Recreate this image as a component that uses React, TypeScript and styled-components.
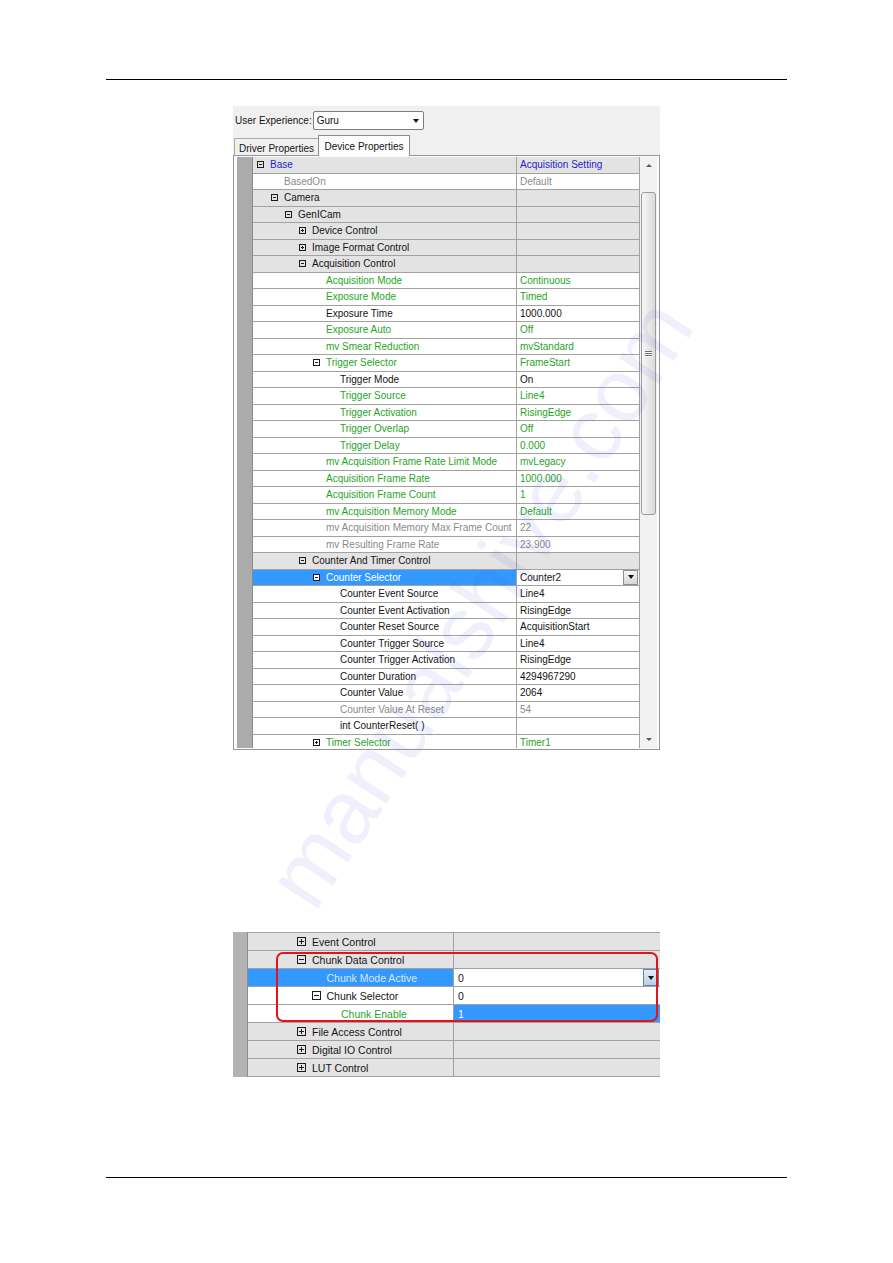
import React from 'react';
import styled, { createGlobalStyle } from 'styled-components';

type Tone = 'black' | 'green' | 'blue' | 'gray' | 'white' | 'pale';
type Fill = 'cat' | 'leaf' | 'sel';

interface PropRow {
  name: string;
  value?: string;
  level: number;
  tone: Tone;
  toggle?: 'plus' | 'minus';
  fill?: Fill;
  dropdown?: boolean;
}

const toneColor: Record<Tone, string> = {
  black: '#141414',
  green: '#1fa51f',
  blue: '#2323cc',
  gray: '#8a8a8a',
  white: '#ffffff',
  pale: '#d9e5fb',
};

const fillColor: Record<Fill, string> = {
  cat: '#e3e3e3',
  leaf: '#ffffff',
  sel: '#3399ff',
};

const GlobalStyle = createGlobalStyle`
  html, body { margin: 0; padding: 0; background: #fff; }
  body { font-family: "Liberation Sans", Arial, sans-serif; }
  * { box-sizing: border-box; }
`;

const Page = styled.div`
  position: relative;
  width: 893px;
  height: 1263px;
  padding: 79px 106px 0;
  overflow: hidden;
`;

const Rule = styled.div<{ $gap?: number }>`
  width: 681px;
  height: 1px;
  background: #000;
  margin-top: ${(p) => p.$gap ?? 0}px;
`;

/* ---------- figure 1: property grid window ---------- */

const Window = styled.div`
  display: flex;
  flex-direction: column;
  width: 427px;
  height: 644px;
  margin: 26px 0 0 127px;
  background: #f0f0f0;
  font-size: 10px;
`;

const Toolbar = styled.div`
  display: flex;
  align-items: center;
  gap: 1px;
  height: 29px;
  padding-left: 2px;
  color: #141414;
`;

const Combo = styled.div`
  display: flex;
  align-items: center;
  justify-content: space-between;
  width: 111px;
  height: 19px;
  padding: 0 4px 0 3px;
  background: #fff;
  border: 1px solid #7d7d7d;
  border-radius: 2px;
`;

const Caret = styled.span<{ $w?: number }>`
  width: 0;
  height: 0;
  border-left: ${(p) => (p.$w ?? 7) / 2}px solid transparent;
  border-right: ${(p) => (p.$w ?? 7) / 2}px solid transparent;
  border-top: ${(p) => Math.round((p.$w ?? 7) / 2)}px solid #111;
`;

const Tabs = styled.div`
  display: flex;
  align-items: flex-end;
  height: 20px;
  padding-left: 1px;
`;

const Tab = styled.div<{ $active?: boolean }>`
  position: relative;
  display: flex;
  align-items: center;
  justify-content: center;
  width: ${(p) => (p.$active ? 92 : 84)}px;
  height: ${(p) => (p.$active ? 21 : 17)}px;
  margin-bottom: ${(p) => (p.$active ? -1 : 0)}px;
  padding-top: ${(p) => (p.$active ? 0 : 2)}px;
  background: ${(p) => (p.$active ? '#fdfdfd' : '#f0f0f0')};
  border: 1px solid ${(p) => (p.$active ? '#8d8d8d' : '#aaaaaa')};
  border-bottom: none;
  border-right-width: ${(p) => (p.$active ? 1 : 0)}px;
  z-index: ${(p) => (p.$active ? 1 : 0)};
  color: #141414;
`;

const Frame = styled.div`
  flex: 1;
  display: flex;
  min-height: 0;
  padding: 1px 2px 1px 3px;
  background: #fbfbfb;
  border: 1px solid #979797;
`;

const Gutter = styled.div<{ $w: number; $color: string }>`
  flex: none;
  width: ${(p) => p.$w}px;
  background: ${(p) => p.$color};
  border-right: 1px solid #8c8c8c;
`;

const Rows = styled.div<{ $w: number; $top?: boolean }>`
  flex: none;
  display: flex;
  flex-direction: column;
  width: ${(p) => p.$w}px;
  overflow: hidden;
  border-top: ${(p) => (p.$top ? '1px solid #a4a4a4' : 'none')};
`;

const Row = styled.div<{ $h: number }>`
  flex: none;
  display: flex;
  height: ${(p) => p.$h}px;
  border-bottom: 1px solid #a2a2a2;
`;

const NameCell = styled.div<{ $w: number; $indent: number; $fill: Fill }>`
  flex: none;
  display: flex;
  align-items: center;
  width: ${(p) => p.$w}px;
  padding-left: ${(p) => p.$indent}px;
  background: ${(p) => fillColor[p.$fill]};
  border-right: 1px solid #a2a2a2;
  white-space: nowrap;
  overflow: hidden;
`;

const ValueCell = styled.div<{ $w: number; $pad: number; $fill: Fill; $edge?: boolean }>`
  flex: none;
  display: flex;
  align-items: center;
  width: ${(p) => p.$w}px;
  padding-left: ${(p) => p.$pad}px;
  padding-right: 1px;
  background: ${(p) => fillColor[p.$fill]};
  border-right: ${(p) => (p.$edge ? '1px solid #a2a2a2' : 'none')};
  white-space: nowrap;
  overflow: hidden;
`;

const Label = styled.span<{ $tone: Tone }>`
  color: ${(p) => toneColor[p.$tone]};
`;

const ToggleSvg = styled.svg<{ $gap: number; $size: number }>`
  flex: none;
  margin: 0 ${(p) => p.$gap}px 0 ${(p) => -(p.$size + p.$gap)}px;
`;

const DropButton = styled.div<{ $w: number; $h: number; $blue?: boolean }>`
  display: flex;
  align-items: center;
  justify-content: center;
  width: ${(p) => p.$w}px;
  height: ${(p) => p.$h}px;
  margin-left: auto;
  border: 1px solid ${(p) => (p.$blue ? '#5f87ad' : '#8e8e8e')};
  background: ${(p) =>
    p.$blue
      ? 'linear-gradient(#e4eef8, #b9cfe4)'
      : 'linear-gradient(#f4f4f4, #d6d6d6)'};
`;

const ScrollBar = styled.div`
  flex: none;
  display: flex;
  flex-direction: column;
  align-items: center;
  width: 17px;
  background: #f2f2f2;
`;

const ArrowButton = styled.div<{ $down?: boolean }>`
  display: flex;
  align-items: center;
  justify-content: center;
  width: 17px;
  height: 17px;
  margin-top: ${(p) => (p.$down ? 'auto' : '0')};
  &::after {
    content: '';
    border-left: 3px solid transparent;
    border-right: 3px solid transparent;
    ${(p) => (p.$down ? 'border-top' : 'border-bottom')}: 3px solid #5a5a5a;
  }
`;

const Thumb = styled.div`
  display: flex;
  flex-direction: column;
  align-items: center;
  justify-content: center;
  gap: 1px;
  width: 15px;
  height: 323px;
  margin-top: 18px;
  border: 1px solid #9c9c9c;
  border-radius: 3px;
  background: linear-gradient(to right, #f6f6f6, #e6e6e6 60%, #dadada);
`;

const Grip = styled.span`
  width: 7px;
  height: 1px;
  background: #6c6c6c;
  box-shadow: 0 1px 0 #fff;
`;

/* ---------- figure 2: cropped grid with annotation ---------- */

const Snippet = styled.div`
  position: relative;
  display: flex;
  width: 427px;
  height: 145px;
  margin: 182px 0 0 127px;
  font-size: 10.5px;
`;

const Highlight = styled.div`
  position: absolute;
  left: 43px;
  top: 20px;
  width: 382px;
  height: 70px;
  border: 2px solid #e1141c;
  border-radius: 7px;
  pointer-events: none;
`;

const Watermark = styled.div`
  position: absolute;
  left: 30px;
  top: 552px;
  width: 900px;
  text-align: center;
  transform: rotate(-57deg);
  font: 90px "Liberation Sans", sans-serif;
  color: rgba(60, 60, 230, 0.08);
  white-space: nowrap;
  pointer-events: none;
`;

function Toggle({ kind, size, gap, filled }: { kind: 'plus' | 'minus'; size: number; gap: number; filled?: boolean }) {
  const m = size / 2;
  return (
    <ToggleSvg width={size} height={size} viewBox={`0 0 ${size} ${size}`} $size={size} $gap={gap}>
      <rect x="0.5" y="0.5" width={size - 1} height={size - 1} fill={filled ? '#fff' : 'none'} stroke="#1c1c1c" />
      <path d={`M2 ${m}H${size - 2}`} stroke="#1c1c1c" />
      {kind === 'plus' && <path d={`M${m} 2V${size - 2}`} stroke="#1c1c1c" />}
    </ToggleSvg>
  );
}

const deviceRows: PropRow[] = [
  { name: 'Base', value: 'Acquisition Setting', level: 0, tone: 'blue', toggle: 'minus', fill: 'cat' },
  { name: 'BasedOn', value: 'Default', level: 1, tone: 'gray' },
  { name: 'Camera', level: 1, tone: 'black', toggle: 'minus', fill: 'cat' },
  { name: 'GenICam', level: 2, tone: 'black', toggle: 'minus', fill: 'cat' },
  { name: 'Device Control', level: 3, tone: 'black', toggle: 'plus', fill: 'cat' },
  { name: 'Image Format Control', level: 3, tone: 'black', toggle: 'plus', fill: 'cat' },
  { name: 'Acquisition Control', level: 3, tone: 'black', toggle: 'minus', fill: 'cat' },
  { name: 'Acquisition Mode', value: 'Continuous', level: 4, tone: 'green' },
  { name: 'Exposure Mode', value: 'Timed', level: 4, tone: 'green' },
  { name: 'Exposure Time', value: '1000.000', level: 4, tone: 'black' },
  { name: 'Exposure Auto', value: 'Off', level: 4, tone: 'green' },
  { name: 'mv Smear Reduction', value: 'mvStandard', level: 4, tone: 'green' },
  { name: 'Trigger Selector', value: 'FrameStart', level: 4, tone: 'green', toggle: 'minus' },
  { name: 'Trigger Mode', value: 'On', level: 5, tone: 'black' },
  { name: 'Trigger Source', value: 'Line4', level: 5, tone: 'green' },
  { name: 'Trigger Activation', value: 'RisingEdge', level: 5, tone: 'green' },
  { name: 'Trigger Overlap', value: 'Off', level: 5, tone: 'green' },
  { name: 'Trigger Delay', value: '0.000', level: 5, tone: 'green' },
  { name: 'mv Acquisition Frame Rate Limit Mode', value: 'mvLegacy', level: 4, tone: 'green' },
  { name: 'Acquisition Frame Rate', value: '1000.000', level: 4, tone: 'green' },
  { name: 'Acquisition Frame Count', value: '1', level: 4, tone: 'green' },
  { name: 'mv Acquisition Memory Mode', value: 'Default', level: 4, tone: 'green' },
  { name: 'mv Acquisition Memory Max Frame Count', value: '22', level: 4, tone: 'gray' },
  { name: 'mv Resulting Frame Rate', value: '23.900', level: 4, tone: 'gray' },
  { name: 'Counter And Timer Control', level: 3, tone: 'black', toggle: 'minus', fill: 'cat' },
  { name: 'Counter Selector', value: 'Counter2', level: 4, tone: 'white', toggle: 'minus', fill: 'sel', dropdown: true },
  { name: 'Counter Event Source', value: 'Line4', level: 5, tone: 'black' },
  { name: 'Counter Event Activation', value: 'RisingEdge', level: 5, tone: 'black' },
  { name: 'Counter Reset Source', value: 'AcquisitionStart', level: 5, tone: 'black' },
  { name: 'Counter Trigger Source', value: 'Line4', level: 5, tone: 'black' },
  { name: 'Counter Trigger Activation', value: 'RisingEdge', level: 5, tone: 'black' },
  { name: 'Counter Duration', value: '4294967290', level: 5, tone: 'black' },
  { name: 'Counter Value', value: '2064', level: 5, tone: 'black' },
  { name: 'Counter Value At Reset', value: '54', level: 5, tone: 'gray' },
  { name: 'int CounterReset( )', level: 5, tone: 'black' },
  { name: 'Timer Selector', value: 'Timer1', level: 4, tone: 'green', toggle: 'plus' },
];

interface ChunkRow extends PropRow {
  valueFill?: Fill;
  valueTone?: Tone;
}

const chunkRows: ChunkRow[] = [
  { name: 'Event Control', level: 0, tone: 'black', toggle: 'plus', fill: 'cat' },
  { name: 'Chunk Data Control', level: 0, tone: 'black', toggle: 'minus', fill: 'cat' },
  { name: 'Chunk Mode Active', value: '0', level: 1, tone: 'pale', fill: 'sel', valueFill: 'leaf', valueTone: 'black', dropdown: true },
  { name: 'Chunk Selector', value: '0', level: 1, tone: 'black', toggle: 'minus', valueFill: 'leaf', valueTone: 'black' },
  { name: 'Chunk Enable', value: '1', level: 2, tone: 'green', valueFill: 'sel', valueTone: 'white' },
  { name: 'File Access Control', level: 0, tone: 'black', toggle: 'plus', fill: 'cat' },
  { name: 'Digital IO Control', level: 0, tone: 'black', toggle: 'plus', fill: 'cat' },
  { name: 'LUT Control', level: 0, tone: 'black', toggle: 'plus', fill: 'cat' },
];

function DeviceGrid() {
  return (
    <Window>
      <Toolbar>
        <span>User Experience:</span>
        <Combo>
          <span>Guru</span>
          <Caret $w={7} />
        </Combo>
      </Toolbar>
      <Tabs>
        <Tab>Driver Properties</Tab>
        <Tab $active>Device Properties</Tab>
      </Tabs>
      <Frame>
        <Gutter $w={16} $color="#ababab" />
        <Rows $w={387}>
          {deviceRows.map((r) => {
            const fill = r.fill ?? 'leaf';
            const valueFill: Fill = fill === 'sel' ? 'leaf' : fill;
            const valueTone: Tone = fill === 'sel' ? 'black' : r.tone;
            return (
              <Row key={r.name} $h={16.5}>
                <NameCell $w={264} $indent={17 + 14 * r.level} $fill={fill}>
                  {r.toggle && <Toggle kind={r.toggle} size={7} gap={6} filled={fill === 'sel'} />}
                  <Label $tone={r.tone}>{r.name}</Label>
                </NameCell>
                <ValueCell $w={123} $pad={3} $fill={valueFill} $edge>
                  <Label $tone={valueTone}>{r.value}</Label>
                  {r.dropdown && (
                    <DropButton $w={15} $h={15}>
                      <Caret $w={7} />
                    </DropButton>
                  )}
                </ValueCell>
              </Row>
            );
          })}
        </Rows>
        <ScrollBar>
          <ArrowButton />
          <Thumb>
            <Grip />
            <Grip />
            <Grip />
          </Thumb>
          <ArrowButton $down />
        </ScrollBar>
      </Frame>
    </Window>
  );
}

function ChunkGrid() {
  return (
    <Snippet>
      <Gutter $w={15} $color="#b3b3b3" />
      <Rows $w={412} $top>
        {chunkRows.map((r) => {
          const fill = r.fill ?? 'leaf';
          return (
            <Row key={r.name} $h={18}>
              <NameCell $w={206} $indent={64 + 14.5 * r.level} $fill={fill}>
                {r.toggle && <Toggle kind={r.toggle} size={9} gap={6} />}
                <Label $tone={r.tone}>{r.name}</Label>
              </NameCell>
              <ValueCell $w={206} $pad={4} $fill={r.valueFill ?? fill}>
                <Label $tone={r.valueTone ?? 'black'}>{r.value}</Label>
                {r.dropdown && (
                  <DropButton $w={16} $h={17} $blue>
                    <Caret $w={7} />
                  </DropButton>
                )}
              </ValueCell>
            </Row>
          );
        })}
      </Rows>
      <Highlight />
    </Snippet>
  );
}

export default function App() {
  return (
    <>
      <GlobalStyle />
      <Page>
        <Rule />
        <DeviceGrid />
        <ChunkGrid />
        <Rule $gap={100} />
        <Watermark>manualshive.com</Watermark>
      </Page>
    </>
  );
}
